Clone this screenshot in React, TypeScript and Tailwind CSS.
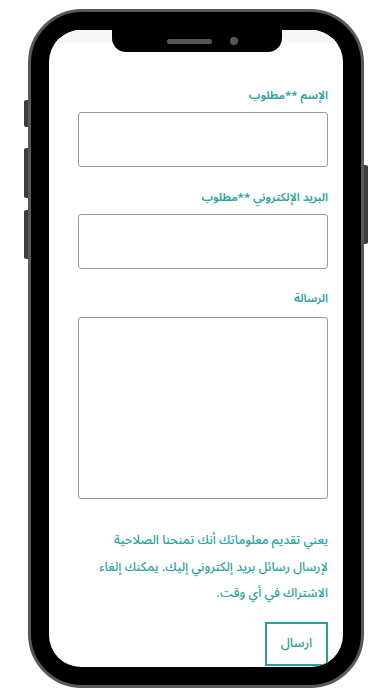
const FONT = "font-['Noto_Sans_Arabic','DejaVu_Sans',sans-serif]";

export default function App() {
  return (
    <div className="w-[392px] h-[696px] bg-white pt-[9px] pl-[28px] overflow-hidden">
      {/* phone body */}
      <div className="relative w-[336px] h-[679px] rounded-[54px] bg-black border-[3px] border-[#585858] p-[18px]">
        {/* side buttons */}
        <div className="absolute left-[-7px] top-[88px] w-[4px] h-[27px] rounded-l-[2px] bg-[#3d3d3d]" />
        <div className="absolute left-[-7px] top-[136px] w-[4px] h-[50px] rounded-l-[2px] bg-[#3d3d3d]" />
        <div className="absolute left-[-7px] top-[198px] w-[4px] h-[49px] rounded-l-[2px] bg-[#3d3d3d]" />
        <div className="absolute right-[-7px] top-[153px] w-[4px] h-[79px] rounded-r-[2px] bg-[#3d3d3d]" />

        {/* screen */}
        <div className="relative w-[294px] h-[637px] rounded-[32px] bg-white overflow-hidden">
          <div className="h-[13px] bg-[#f7f7f7]" />

          {/* notch */}
          <div className="absolute top-0 left-[63px] w-[170px] h-[22px] bg-black rounded-b-[14px] flex items-center justify-center gap-[18px] pl-[10px]">
            <div className="w-[45px] h-[5px] rounded-full bg-[#555]" />
            <div className="w-[8px] h-[8px] rounded-full bg-[#555]" />
          </div>

          <form dir="rtl" className={`${FONT} pr-[15px] pl-[29px] pt-[42px] text-[#2a9fa2]`}>
            <label className="block text-[11.5px] font-semibold leading-[20px] mb-[7px]">الإسم **مطلوب</label>
            <input className="block w-full h-[55px] border border-[#9a9a9a] rounded-[3px] bg-white" />

            <label className="block text-[11.5px] font-semibold leading-[20px] mt-[20px] mb-[7px]">البريد الإلكتروني **مطلوب</label>
            <input className="block w-full h-[55px] border border-[#9a9a9a] rounded-[3px] bg-white" />

            <label className="block text-[11.5px] font-semibold leading-[20px] mt-[19px] mb-[9px]">الرسالة</label>
            <textarea className="block w-full h-[182px] border border-[#9a9a9a] rounded-[3px] bg-white resize-none" />

            <p className="mt-[28px] text-[12.5px] font-medium leading-[26.5px]">
              يعني تقديم معلوماتك أنك تمنحنا الصلاحية لإرسال رسائل بريد إلكتروني إليك. يمكنك إلغاء الاشتراك في أي وقت.
            </p>

            <button type="button" className="mt-[15px] w-[63px] h-[44px] border-2 border-[#2a9fa2] text-[13px] font-medium text-[#2a9fa2]">
              ارسال
            </button>
          </form>
        </div>
      </div>
    </div>
  );
}
